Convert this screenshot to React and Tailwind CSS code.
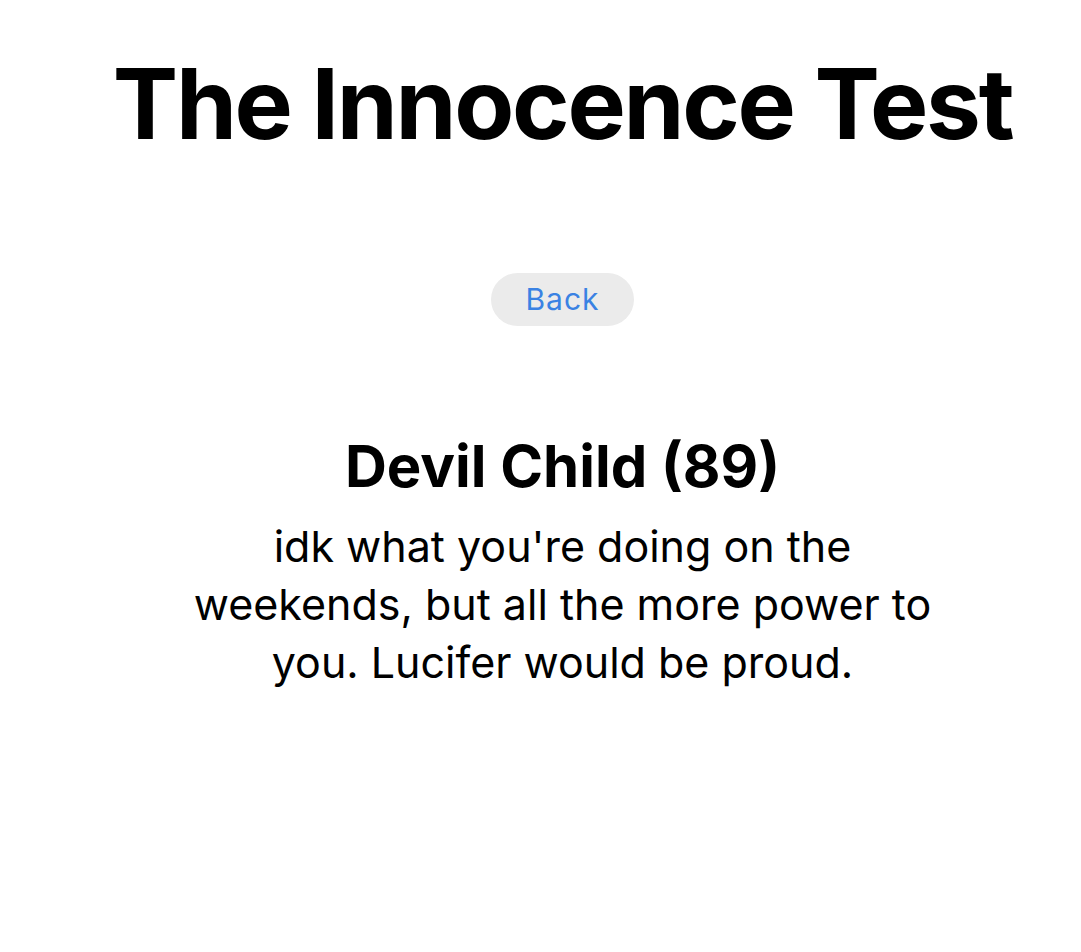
export default function App() {
  return (
    <div
      className="min-h-[952px] w-full bg-white text-black pl-[44px] flex flex-col items-center"
      style={{ fontFamily: 'Inter, "Liberation Sans", sans-serif' }}
    >
      <h1 className="mt-[49px] text-[98px] leading-[110px] font-bold tracking-[-2.3px]">
        The Innocence Test
      </h1>

      <button className="mt-[114px] w-[143px] h-[53px] rounded-full bg-[#ebebeb] text-[30px] tracking-[1px] text-[#3a82e3]">
        Back
      </button>

      <div className="mt-[108px] flex flex-col items-center text-center">
        <h2 className="text-[58px] leading-[64px] font-bold">Devil Child (89)</h2>
        <p className="mt-[19px] w-[760px] text-[43px] leading-[58px]">
          idk what you're doing on the
          <br />
          weekends, but all the more power to
          <br />
          you. Lucifer would be proud.
        </p>
      </div>
    </div>
  );
}
